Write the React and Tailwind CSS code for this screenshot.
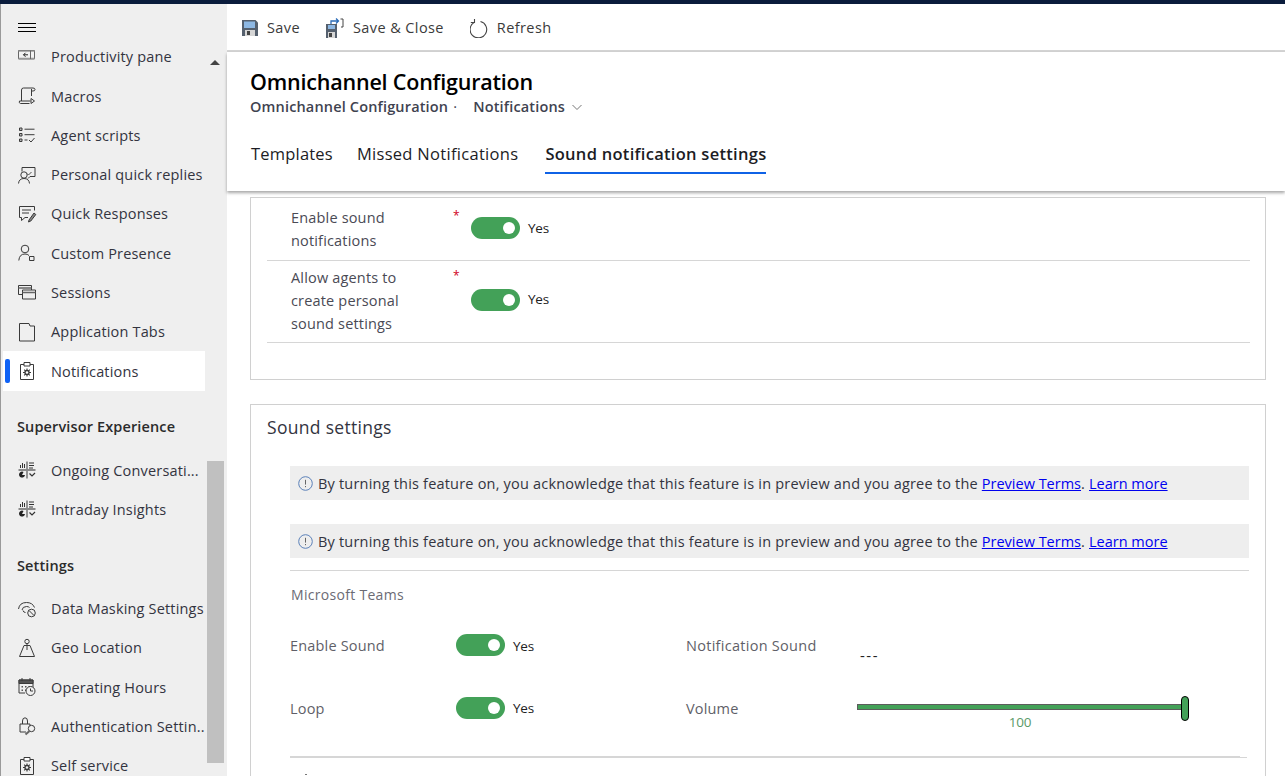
const font = { fontFamily: '"Open Sans", "Noto Sans", sans-serif' };

function Svg({ children, size = 20, className = "" }) {
  return (
    <svg width={size} height={size} viewBox="0 0 20 20" fill="none" stroke="currentColor" strokeWidth="1" className={className}>
      {children}
    </svg>
  );
}

const icons = {
  pane: (
    <>
      <path d="M1.500 3.500h16v8.500h-16z" fill="#f2f2f2" stroke="#666" />
      <path d="M1.500 3.500h16v1.200h-16zM1.500 10.800h16V12h-16z" fill="#999" stroke="none" />
      <path d="M13.500 3.500V12" stroke="#666" />
      <path d="M11 7.800H6.500M8.500 5.800l-2 2 2 2" stroke="#222" />
    </>
  ),
  macros: (
    <>
      <path d="M4.500 15V4q0-2 2-2H16q2 0 2 1.500T16 5h-1.500M14.500 3v7M4.500 15H2.500q-1 2 1 2.500h9" />
      <path d="M14 12.500v5l3.500-2.500z" fill="#efefef" />
      <path d="M4.500 15h9" />
    </>
  ),
  scripts: (
    <>
      <path d="M2.500 3h2.500v2.500h-2.500zM2.500 8.500h2.500v2.500h-2.500zM2.500 14h2.500v2.500h-2.500z" fill="#bbb" />
      <path d="M7.500 4.200h10M7.500 9.700h10M7.500 15h3M12 15l2 2 3.500-4" />
    </>
  ),
  replies: (
    <>
      <path d="M5 6.500V2.500h13v9h-5l-2 2" />
      <path d="M10 8.500l1.500 1.500 3-3" strokeWidth="0.9" />
      <circle cx="7" cy="10" r="3.200" fill="#efefef" />
      <path d="M1.500 18.500q.5-5 5.500-5t5.500 5" />
    </>
  ),
  responses: (
    <>
      <path d="M2.500 2.500h15v4M2.500 2.500v11h2v3l3.500-3h3" />
      <path d="M5 6h9M5 9h7" />
      <path d="M12 16l5-7 1.800 1.500-5 6.500-2.300 1z" fill="#888" />
    </>
  ),
  presence: (
    <>
      <circle cx="8" cy="6" r="3.800" />
      <path d="M1.800 17.500q.5-6.500 6.200-6.500 2.500 0 4 1.500" />
      <path d="M12.500 13.500h4.500v4h-4.500z" />
    </>
  ),
  sessions: (
    <>
      <path d="M1.500 3.500h13v9h-13z" />
      <path d="M1.500 6h13" strokeWidth="1.500" stroke="#666" />
      <path d="M5.500 8h13v9h-13z" fill="#efefef" />
      <path d="M5.500 10.500h13" strokeWidth="1.500" stroke="#666" />
    </>
  ),
  tabs: <path d="M2.500 1.500h9.500l1 2.500h4.500v15h-15z" />,
  clipboard: (
    <>
      <path d="M3.500 3.500h13v15h-13z" />
      <path d="M7 1.500h6v3.500H7z" fill="#fff" />
      <circle cx="10" cy="11.500" r="2" strokeWidth="1.300" />
      <path d="M10 7.500v2M10 13.500v2M6 11.500h2M12 11.500h2M7.200 8.700l1.400 1.400M11.400 12.900l1.400 1.400M7.200 14.300l1.400-1.400M11.400 10.100l1.400-1.400" strokeWidth="1.100" />
    </>
  ),
  insights: (
    <>
      <path d="M10 1.500v17M1.500 10h17" stroke="#8a8a8a" strokeWidth="1.800" />
      <path d="M3.500 8V5M5.500 8V3M7.500 8V4M12 3h5M12 5.500h5M12 8h4" stroke="#333" />
      <path d="M6.500 12a3 3 0 1 0 1.500 3H5z" fill="#222" stroke="none" />
      <path d="M12.500 13.500l2.500 2.500 3-3" stroke="#333" strokeWidth="1.200" />
    </>
  ),
  masking: (
    <>
      <path d="M1.500 10q1-6.500 8-6.500 6 0 8 5" />
      <path d="M5 11q.5-3.500 4.500-3.500 2 0 3 1M6 11.500q.5 2 2.500 2" />
      <circle cx="14.500" cy="14" r="3.800" fill="#efefef" />
      <path d="M12 11.500l5 5" />
    </>
  ),
  geo: (
    <>
      <circle cx="10" cy="3.500" r="2.200" />
      <path d="M10 5.700V12M7 7.500h6l4.500 11h-15z" />
    </>
  ),
  hours: (
    <>
      <path d="M2 3h14v8M2 3v13h6" />
      <path d="M2 3h14v3.500H2z" fill="#555" />
      <path d="M5 1v3M13 1v3" />
      <path d="M4.500 9h1.500v1.500H4.500zM8 9h1.500v1.500H8zM11.500 9H13v1.500h-1.500zM4.500 12.500h1.500V14H4.500zM8 12.500h1.500V14H8z" fill="#555" stroke="none" />
      <circle cx="13.500" cy="14" r="4.500" fill="#efefef" />
      <path d="M13.500 11.500V14h2.500" />
    </>
  ),
  auth: (
    <>
      <path d="M3 8h10v4M3 8v8h6" />
      <path d="M5.500 8V5q0-3.200 2.500-3.200T10.500 5v3" />
      <circle cx="14.500" cy="12.500" r="3.200" fill="#efefef" />
      <path d="M12.500 15l-4 3.500" strokeWidth="2" stroke="#666" />
    </>
  ),
};

function NavItem({ icon, label, active }) {
  return (
    <div className={`relative flex h-[39.3px] w-[202px] items-center pl-[14px] ${active ? "bg-white" : ""}`}>
      {active && <span className="absolute left-[2px] top-[8px] h-[24px] w-[5px] rounded-[2px] bg-[#0f62f5]" />}
      <Svg className="shrink-0 text-[#3a3a3a]">{icons[icon]}</Svg>
      <span className="ml-[14px] whitespace-nowrap pt-px text-[14.5px] tracking-[0.17px] text-[#33343f]">{label}</span>
    </div>
  );
}

function Sidebar() {
  return (
    <aside className="relative h-full w-[227px] shrink-0 overflow-hidden border-l border-[#9a9a9a] bg-[#efefef] pl-[2px]">
      <div className="flex h-[33px] items-center pl-[15px] pt-[14px]">
        <div className="flex w-[18px] flex-col gap-[3px]">
          <span className="h-px bg-black" />
          <span className="h-px bg-black" />
          <span className="h-px bg-black" />
        </div>
      </div>
      <NavItem icon="pane" label="Productivity pane" />
      <NavItem icon="macros" label="Macros" />
      <NavItem icon="scripts" label="Agent scripts" />
      <NavItem icon="replies" label="Personal quick replies" />
      <NavItem icon="responses" label="Quick Responses" />
      <NavItem icon="presence" label="Custom Presence" />
      <NavItem icon="sessions" label="Sessions" />
      <NavItem icon="tabs" label="Application Tabs" />
      <NavItem icon="clipboard" label="Notifications" active />
      <h3 className="flex h-[59.8px] items-center pl-[14px] pt-[12px] text-[14.5px] font-semibold tracking-[0.13px] text-[#2b2b2b]">
        Supervisor Experience
      </h3>
      <NavItem icon="insights" label="Ongoing Conversati..." />
      <NavItem icon="insights" label="Intraday Insights" />
      <h3 className="flex h-[59.8px] items-center pl-[14px] pt-[13px] text-[14.5px] font-semibold tracking-[0.13px] text-[#2b2b2b]">
        Settings
      </h3>
      <div className="w-[204px] overflow-hidden">
        <NavItem icon="masking" label="Data Masking Settings" />
      </div>
      <NavItem icon="geo" label="Geo Location" />
      <NavItem icon="hours" label="Operating Hours" />
      <NavItem icon="auth" label="Authentication Settin.." />
      <NavItem icon="clipboard" label="Self service" />
      <span className="absolute left-[209px] top-[56px] h-0 w-0 border-x-[5px] border-b-[5px] border-x-transparent border-b-[#444]" />
      <span className="absolute left-[206px] top-[457px] h-[302px] w-[17px] bg-[#c0c0c0]" />
    </aside>
  );
}

function ToolButton({ icon, label }) {
  return (
    <div className="flex items-center gap-[9px]">
      {icon}
      <span className="text-[14.5px] tracking-[0.4px] text-[#3b3b3b]">{label}</span>
    </div>
  );
}

function Toolbar() {
  return (
    <div className="flex h-[48px] shrink-0 items-center gap-[26px] border-b-2 border-[#d4d4d4] bg-white pl-[15px] pt-[2px]">
      <ToolButton
        label="Save"
        icon={
          <svg width="16" height="16" viewBox="0 0 16 16">
            <path d="M0 0h13.500L16 2.500V16H0z" fill="#55606e" />
            <path d="M2 1.500h11v6.500H2z" fill="#8db8e4" />
            <path d="M3 10h10v6H3z" fill="#d6d6d6" />
            <path d="M5 11h3v4H5z" fill="#444" />
          </svg>
        }
      />
      <ToolButton
        label="Save & Close"
        icon={
          <svg width="18" height="20" viewBox="0 0 18 20">
            <path d="M0 6h11v14H0z" fill="#55606e" />
            <path d="M2 7h7v4H2z" fill="#8db8e4" />
            <path d="M2 14h7v6H2z" fill="#d6d6d6" />
            <path d="M3 15h3v4H3z" fill="#444" />
            <path d="M5 6V3h7M10 .5 12.500 3 10 5.500" fill="none" stroke="#2b6cb8" strokeWidth="1.300" />
            <path d="M14.500 1H17v8h-2" fill="none" stroke="#444" />
          </svg>
        }
      />
      <ToolButton
        label="Refresh"
        icon={
          <svg width="18" height="19" viewBox="0 0 18 19" fill="none" stroke="#444" strokeWidth="1.100">
            <path d="M4.500 3.200a8.300 8.300 0 1 0 6-.7" />
            <path d="M4.500 0v3.500H.8" />
          </svg>
        }
      />
    </div>
  );
}

function Header() {
  return (
    <header className="relative z-10 h-[139px] shrink-0 bg-white pl-[23px] pt-[15px] shadow-[0_2px_3px_rgba(0,0,0,0.35)]">
      <h1 className="text-[21.5px] leading-[30px] font-semibold tracking-[-0.2px] text-black">Omnichannel Configuration</h1>
      <div className="flex h-[20px] items-center text-[14.5px] font-semibold tracking-[0.16px] text-[#3f4350]">
        <span>Omnichannel Configuration</span>
        <span className="ml-[5px] font-normal">·</span>
        <span className="ml-[16px]">Notifications</span>
        <svg width="12" height="12" viewBox="0 0 12 12" fill="none" stroke="#777" className="ml-[6px]">
          <path d="M1.500 4 6 8.500 10.500 4" />
        </svg>
      </div>
      <nav className="ml-px mt-[22px] flex gap-[24px] text-[16.5px] tracking-[0.2px] text-[#1c1c24]">
        <span className="h-[35px] pt-[3px]">Templates</span>
        <span className="h-[35px] pt-[3px] tracking-[0.3px]">Missed Notifications</span>
        <span className="ml-[3px] h-[35px] border-b-2 border-[#0f62e6] pt-[3px] font-semibold tracking-[0.28px]">
          Sound notification settings
        </span>
      </nav>
    </header>
  );
}

function Toggle() {
  return (
    <div className="flex h-[22px] w-[49px] items-center justify-end rounded-full bg-[#43a158] pr-[5px]">
      <span className="size-[12px] rounded-full bg-white" />
    </div>
  );
}

function Required({ label, rowClass, toggleClass }) {
  return (
    <div className={`flex border-b border-[#d6d6d6] pl-[24px] ${rowClass}`}>
      <div className="w-[162px] whitespace-pre-line text-[14.5px] leading-[23px] tracking-[0.17px] text-[#4a4a55]">{label}</div>
      <span className="w-[18px] pt-[2px] text-[12px] leading-[16px] text-[#d0021b]">*</span>
      <div className={`flex items-center gap-[8px] ${toggleClass}`}>
        <Toggle />
        <span className="text-[13.5px] tracking-[-0.2px] text-[#222]">Yes</span>
      </div>
    </div>
  );
}

function Notice() {
  return (
    <div className="flex h-[34px] items-center gap-[5px] bg-[#eeeeee] pl-[8px] text-[14.5px] tracking-[0.2px] text-[#33343f]">
      <svg width="15" height="15" viewBox="0 0 15 15" fill="none" className="shrink-0">
        <circle cx="7.500" cy="7.500" r="6.800" stroke="#5b80b8" />
        <path d="M7.500 3.800v4.800M7.500 10v1.200" stroke="#666" />
      </svg>
      <span className="pt-px">
        By turning this feature on, you acknowledge that this feature is in preview and you agree to the{" "}
        <a className="tracking-[0px] text-[#0000ee] underline">Preview Terms</a>.{" "}
        <a className="tracking-[0px] text-[#0000ee] underline">Learn more</a>
      </span>
    </div>
  );
}

function SoundRow({ label, right, rowClass, yesClass = "" }) {
  return (
    <div className={`flex ${rowClass}`}>
      <div className="w-[166px] pt-[2px] text-[14.5px] tracking-[0.17px] text-[#5f5f68]">{label}</div>
      <div className="flex h-[23px] w-[230px] items-center gap-[8px]">
        <Toggle />
        <span className={`text-[13.5px] tracking-[-0.2px] text-[#222] ${yesClass}`}>Yes</span>
      </div>
      {right}
    </div>
  );
}

function Main() {
  return (
    <main className="flex min-w-0 flex-1 flex-col bg-white">
      <Toolbar />
      <Header />
      <div className="flex-1 overflow-hidden pl-[23px] pr-[19px] pt-[6px]">
        <section className="h-[183px] border border-[#d0d0d0] pr-[15px] pl-[16px]">
          <Required label={"Enable sound\nnotifications"} rowClass="h-[63px] pt-[8px]" toggleClass="h-[44px]" />
          <Required label={"Allow agents to\ncreate personal\nsound settings"} rowClass="h-[82px] pt-[5px]" toggleClass="h-[67px]" />
        </section>
        <section className="mt-[24px] h-[500px] border border-[#d0d0d0] pl-[16px] pr-[16px]">
          <h2 className="pt-[9px] text-[17.5px] leading-[27px] tracking-[0.3px] text-[#33343f]">Sound settings</h2>
          <div className="ml-[23px] mt-[25px]">
            <Notice />
            <div className="mt-[24px]">
              <Notice />
            </div>
            <div className="mt-[12px] border-t border-[#d6d6d6] pl-px pt-[14px] text-[14px] leading-[20px] tracking-[0.3px] text-[#6b6b74]">
              Microsoft Teams
            </div>
            <SoundRow
              label="Enable Sound"
              rowClass="mt-[28px] h-[63px]"
              yesClass="pt-[3px]"
              right={
                <div className="flex">
                  <div className="w-[174px] pt-[2px] text-[14.5px] tracking-[0.28px] text-[#5f5f68]">Notification Sound</div>
                  <span className="pt-[12px] text-[15px] leading-[20px] tracking-[1.5px] text-[#222]">---</span>
                </div>
              }
            />
            <SoundRow
              label="Loop"
              rowClass="h-[60px]"
              yesClass="pt-px"
              right={
                <div className="flex">
                  <div className="w-[171px] pt-[2px] text-[14.5px] tracking-[0.17px] text-[#5f5f68]">Volume</div>
                  <div className="relative w-[332px]">
                    <div className="mt-[8px] h-[6px] w-[328px] border border-[#5c5c5c] bg-[#43a158]" />
                    <span className="absolute left-[324px] top-0 h-[25px] w-[8px] rounded-[4px] border border-black bg-[#43a158]" />
                    <div className="mt-[3px] w-[326px] text-center text-[13.5px] leading-[18px] tracking-[-0.3px] text-[#5a9a68]">100</div>
                  </div>
                </div>
              }
            />
            <div className="relative h-[2px] w-[950px] bg-[#d6d6d6]">
              <span className="absolute left-[950px] top-px h-px w-[7px] bg-[#d6d6d6]" />
            </div>
            <div className="ml-[15px] mt-[16px] h-px w-[2px] bg-[#777]" />
          </div>
        </section>
      </div>
    </main>
  );
}

export default function App() {
  return (
    <div className="flex h-[776px] w-full flex-col overflow-hidden bg-white" style={font}>
      <div className="h-[4px] shrink-0 bg-[#0a1c3c]" />
      <div className="flex min-h-0 flex-1">
        <Sidebar />
        <Main />
      </div>
    </div>
  );
}
